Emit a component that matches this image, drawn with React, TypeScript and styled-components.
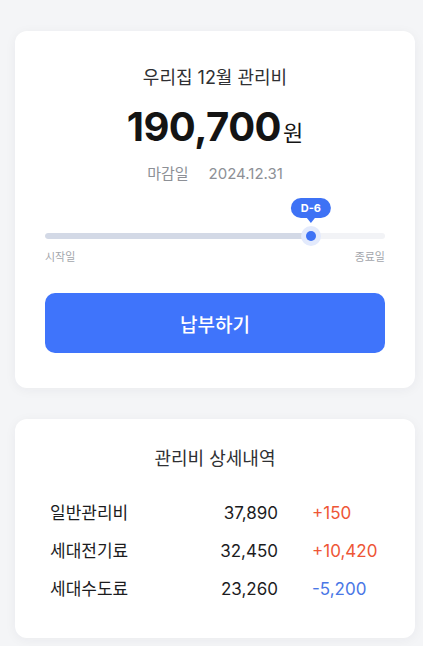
import React from "react";
import styled, { createGlobalStyle } from "styled-components";

const GlobalStyle = createGlobalStyle`
  html, body {
    margin: 0;
    padding: 0;
    background: #f4f5f7;
    font-family: Inter, "Noto Sans CJK KR", sans-serif;
  }
  * { box-sizing: border-box; }
`;

const Page = styled.main`
  display: flex;
  flex-direction: column;
  gap: 31px;
  padding: 31px 8px 10px 15px;
  min-height: 646px;
`;

const Card = styled.section<{ $padding: string }>`
  width: 400px;
  background: #ffffff;
  border-radius: 12px;
  box-shadow: 0 2px 12px rgba(30, 40, 60, 0.05);
  padding: ${(p) => p.$padding};
  display: flex;
  flex-direction: column;
`;

const Title = styled.h2`
  margin: 0;
  text-align: center;
  font-size: 18px;
  line-height: 24px;
  height: 24px;
  font-weight: 400;
  color: #2f3033;
`;

const Amount = styled.div`
  margin-top: 13px;
  height: 48px;
  display: flex;
  justify-content: center;
  align-items: baseline;
  line-height: 48px;
  color: #141414;
`;

const Number = styled.span`
  font-size: 40px;
  font-weight: 700;
  letter-spacing: -0.5px;
`;

const Unit = styled.span`
  font-size: 22px;
  font-weight: 400;
  margin-left: 2px;
`;

const DueRow = styled.div`
  margin-top: 13px;
  height: 20px;
  display: flex;
  justify-content: center;
  gap: 20px;
  font-size: 15px;
  line-height: 20px;
  color: #8d9096;
`;

const Slider = styled.div`
  margin-top: 14px;
  padding-top: 28px;
`;

const TrackRow = styled.div`
  position: relative;
  height: 20px;
  display: flex;
  align-items: center;
`;

const Track = styled.div`
  width: 100%;
  height: 6px;
  border-radius: 3px;
  background: #f2f3f6;
  overflow: hidden;
`;

const Fill = styled.div`
  height: 100%;
  background: #d3d9e6;
  border-radius: 3px;
`;

const Thumb = styled.div`
  position: absolute;
  top: 0;
  width: 20px;
  height: 20px;
  margin-left: -10px;
  border-radius: 50%;
  background: #e3eafc;
  display: flex;
  align-items: center;
  justify-content: center;

  &::after {
    content: "";
    width: 10px;
    height: 10px;
    border-radius: 50%;
    background: #3e72f5;
  }
`;

const Tooltip = styled.div`
  position: absolute;
  bottom: 28px;
  left: 50%;
  transform: translateX(-50%);
  height: 20px;
  padding: 0 10px;
  border-radius: 10px;
  background: #3e72f5;
  color: #ffffff;
  font-size: 11px;
  font-weight: 700;
  line-height: 20px;
  white-space: nowrap;

  &::after {
    content: "";
    position: absolute;
    left: 50%;
    top: 100%;
    margin-left: -4px;
    border-left: 4px solid transparent;
    border-right: 4px solid transparent;
    border-top: 5px solid #3e72f5;
  }
`;

const Labels = styled.div`
  margin-top: 4px;
  height: 14px;
  display: flex;
  justify-content: space-between;
  font-size: 11px;
  line-height: 14px;
  color: #a3a6ac;
`;

const PayButton = styled.button`
  margin-top: 29px;
  height: 60px;
  width: 100%;
  border: none;
  border-radius: 10px;
  background: #3f74fb;
  color: #ffffff;
  font-family: inherit;
  font-size: 19px;
  font-weight: 500;
  cursor: pointer;
`;

const Rows = styled.div`
  margin-top: 30px;
  display: flex;
  flex-direction: column;
  gap: 14px;
`;

const Row = styled.div`
  display: grid;
  grid-template-columns: 86px 108px 1fr;
  column-gap: 34px;
  height: 24px;
  font-size: 17px;
  line-height: 24px;
  color: #1c1c1e;
`;

const Value = styled.span`
  text-align: right;
`;

const Diff = styled.span<{ $up: boolean }>`
  color: ${(p) => (p.$up ? "#ee5636" : "#4a77e6")};
`;

const items = [
  { label: "일반관리비", value: "37,890", diff: "+150", up: true },
  { label: "세대전기료", value: "32,450", diff: "+10,420", up: true },
  { label: "세대수도료", value: "23,260", diff: "-5,200", up: false },
];

export default function App() {
  const progress = 78.2;
  return (
    <>
      <GlobalStyle />
      <Page>
        <Card $padding="35px 30px 35px">
          <Title>우리집 12월 관리비</Title>
          <Amount>
            <Number>190,700</Number>
            <Unit>원</Unit>
          </Amount>
          <DueRow>
            <span>마감일</span>
            <span>2024.12.31</span>
          </DueRow>
          <Slider>
            <TrackRow>
              <Track>
                <Fill style={{ width: `${progress}%` }} />
              </Track>
              <Thumb style={{ left: `${progress}%` }}>
                <Tooltip>D-6</Tooltip>
              </Thumb>
            </TrackRow>
            <Labels>
              <span>시작일</span>
              <span>종료일</span>
            </Labels>
          </Slider>
          <PayButton>납부하기</PayButton>
        </Card>
        <Card $padding="28px 35px 37px">
          <Title>관리비 상세내역</Title>
          <Rows>
            {items.map((it) => (
              <Row key={it.label}>
                <span>{it.label}</span>
                <Value>{it.value}</Value>
                <Diff $up={it.up}>{it.diff}</Diff>
              </Row>
            ))}
          </Rows>
        </Card>
      </Page>
    </>
  );
}
